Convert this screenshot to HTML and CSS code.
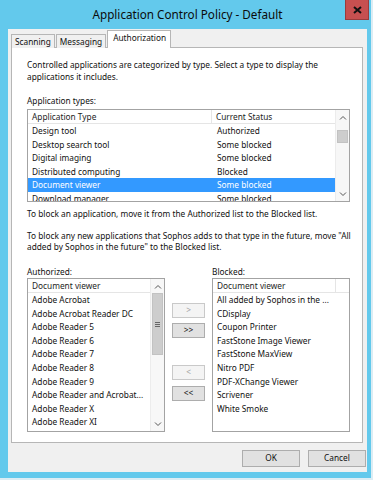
FILE: index.html
```html
<!DOCTYPE html>
<html lang="en">
<head>
  <meta charset="UTF-8">
  <title>Application Control Policy - Default</title>
  <link rel="stylesheet" href="styles.css">
</head>
<body>
  <div class="window">
    <div class="titlebar">
      <span class="title">Application Control Policy - Default</span>
      <button class="close" title="Close">
        <svg width="9" height="8" viewBox="0 0 9 8"><path d="M1 1 L8 7 M8 1 L1 7" stroke="#111" stroke-width="2"/></svg>
      </button>
    </div>

    <div class="client">
      <div class="tabs">
        <div class="tab">Scanning</div>
        <div class="tab">Messaging</div>
        <div class="tab active">Authorization</div>
      </div>

      <div class="panel">
        <p class="intro">Controlled applications are categorized by type. Select a type to display the applications it includes.</p>

        <div class="group-label">Application types:</div>
        <div class="listview types">
          <div class="lv-main">
            <div class="lv-head">
              <div class="col">Application Type</div>
              <div class="col">Current Status</div>
            </div>
            <div class="lv-row"><span>Design tool</span><span>Authorized</span></div>
            <div class="lv-row"><span>Desktop search tool</span><span>Some blocked</span></div>
            <div class="lv-row"><span>Digital imaging</span><span>Some blocked</span></div>
            <div class="lv-row"><span>Distributed computing</span><span>Blocked</span></div>
            <div class="lv-row selected"><span>Document viewer</span><span>Some blocked</span></div>
            <div class="lv-row"><span>Download manager</span><span>Some blocked</span></div>
          </div>
          <div class="vscroll">
            <div class="arrow"><svg width="8" height="5" viewBox="0 0 8 5"><polyline points="1,4.5 4,1.5 7,4.5" fill="none" stroke="#555" stroke-width="1"/></svg></div>
            <div class="track"><div class="thumb small"></div></div>
            <div class="arrow"><svg width="8" height="5" viewBox="0 0 8 5"><polyline points="1,0.5 4,3.5 7,0.5" fill="none" stroke="#555" stroke-width="1"/></svg></div>
          </div>
        </div>

        <p class="note">To block an application, move it from the Authorized list to the Blocked list.</p>
        <p class="note second">To block any new applications that Sophos adds to that type in the future, move "All added by Sophos in the future" to the Blocked list.</p>

        <div class="pickers">
          <div class="group-label">Authorized:</div>
          <div></div>
          <div class="group-label">Blocked:</div>

          <div class="listview apps">
            <div class="lv-main">
              <div class="lv-head"><div class="col">Document viewer</div></div>
              <div class="item">Adobe Acrobat</div>
              <div class="item">Adobe Acrobat Reader DC</div>
              <div class="item">Adobe Reader 5</div>
              <div class="item">Adobe Reader 6</div>
              <div class="item">Adobe Reader 7</div>
              <div class="item">Adobe Reader 8</div>
              <div class="item">Adobe Reader 9</div>
              <div class="item">Adobe Reader and Acrobat...</div>
              <div class="item">Adobe Reader X</div>
              <div class="item">Adobe Reader XI</div>
            </div>
            <div class="vscroll">
              <div class="arrow"><svg width="8" height="5" viewBox="0 0 8 5"><polyline points="1,4.5 4,1.5 7,4.5" fill="none" stroke="#555" stroke-width="1"/></svg></div>
              <div class="track">
                <div class="thumb tall">
                  <svg width="5" height="5" viewBox="0 0 5 5"><path d="M0 0.5 H5 M0 2.5 H5 M0 4.5 H5" stroke="#666" stroke-width="1"/></svg>
                </div>
              </div>
              <div class="arrow"><svg width="8" height="5" viewBox="0 0 8 5"><polyline points="1,0.5 4,3.5 7,0.5" fill="none" stroke="#555" stroke-width="1"/></svg></div>
            </div>
          </div>

          <div class="movers">
            <button class="btn small" disabled>&gt;</button>
            <button class="btn small">&gt;&gt;</button>
            <button class="btn small back" disabled>&lt;</button>
            <button class="btn small">&lt;&lt;</button>
          </div>

          <div class="listview apps">
            <div class="lv-main">
              <div class="lv-head split"><div class="col">Document viewer</div><div class="col"></div></div>
              <div class="item">All added by Sophos in the ...</div>
              <div class="item">CDisplay</div>
              <div class="item">Coupon Printer</div>
              <div class="item">FastStone Image Viewer</div>
              <div class="item">FastStone MaxView</div>
              <div class="item">Nitro PDF</div>
              <div class="item">PDF-XChange Viewer</div>
              <div class="item">Scrivener</div>
              <div class="item">White Smoke</div>
            </div>
          </div>
        </div>
      </div>

      <div class="footer">
        <button class="btn">OK</button>
        <button class="btn">Cancel</button>
      </div>
    </div>
  </div>
</body>
</html>
```

FILE: styles.css
```css
* {
  box-sizing: border-box;
}
body {
  margin: 0;
  background: #dcedf4;
  font-family: "Noto Sans", "Open Sans", sans-serif;
  font-size: 8.3px;
  color: #111;
}
.window {
  width: 371px;
  height: 478px;
  background: #63c9ec;
  display: flex;
  flex-direction: column;
}
.titlebar {
  height: 29px;
  position: relative;
  display: flex;
  align-items: center;
  justify-content: center;
}
.title {
  font-size: 11.7px;
  color: #0b0b0b;
  margin-top: -1px;
  margin-left: 4px;
}
.close {
  position: absolute;
  top: 0;
  right: 2px;
  width: 24px;
  height: 20px;
  padding: 0;
  background: #c75050;
  border: 1px solid #9a3c3c;
  border-top: none;
  display: flex;
  align-items: center;
  justify-content: center;
}

/* dialog body */
.client {
  height: 443px;
  margin: 0 4px 0 8px;
  padding: 1px 1px 0 3px;
  background: #f0f0f0;
}
.tabs {
  display: flex;
  align-items: flex-end;
  height: 18px;
  margin-bottom: -1px;
  position: relative;
  z-index: 1;
}
.tab {
  height: 14px;
  line-height: 13px;
  padding: 0 3px;
  border: 1px solid #b6b6b6;
  border-bottom: none;
  background: #f0f0f0;
  white-space: nowrap;
}
.tab + .tab {
  margin-left: 1px;
}
.tab.active {
  height: 18px;
  line-height: 14px;
  padding: 0 4px 0 5px;
  background: #fff;
}
.panel {
  width: 352px;
  height: 396px;
  background: #fff;
  border: 1px solid #b6b6b6;
  padding: 11px 12px 0 15px;
}
p {
  margin: 0;
}
.intro, .note {
  line-height: 11.5px;
}
.group-label {
  line-height: 11.5px;
  margin-top: 13px;
}
.note {
  margin-top: 6px;
  margin-right: -9px;
}
.note.second {
  margin-top: 10px;
}

/* list views */
.listview {
  display: flex;
  border: 1px solid #a3a3a3;
  background: #fff;
  overflow: hidden;
}
.lv-main {
  flex: 1;
  min-width: 0;
}
.lv-head {
  display: flex;
  height: 14px;
  line-height: 13px;
  border-bottom: 1px solid #e5e5e5;
  color: #1e1e1e;
}
.lv-head .col {
  padding-left: 4px;
  white-space: nowrap;
}
.types {
  height: 93px;
  margin-top: 2.5px;
}
.types .lv-head .col:first-child {
  width: 184px;
  border-right: 1px solid #e5e5e5;
}
.types .lv-head .col:last-child {
  flex: 1;
  padding-left: 4px;
}
.lv-row {
  display: grid;
  grid-template-columns: 184px 1fr;
  height: 13.6px;
  line-height: 13.6px;
  white-space: nowrap;
}
.lv-row span {
  padding-left: 4px;
}
.lv-row span + span {
  padding-left: 5px;
}
.lv-row.selected {
  background: #3399ff;
  color: #fff;
}

.vscroll {
  width: 14px;
  display: flex;
  flex-direction: column;
  background: #f7f7f7;
  border-left: 1px solid #ececec;
}
.arrow {
  height: 14px;
  display: flex;
  align-items: center;
  justify-content: center;
}
.track {
  flex: 1;
}
.thumb {
  margin: 0 1px;
  background: #cdcdcd;
  border: 1px solid #c2c2c2;
  display: flex;
  align-items: center;
  justify-content: center;
}
.thumb.small {
  margin-top: 6px;
  height: 13px;
}
.thumb.tall {
  height: 62px;
}

.pickers {
  display: grid;
  grid-template-columns: 138px 47px 1fr;
}
.pickers .group-label {
  margin-top: 13px;
}
.apps {
  margin-top: 1px;
  height: 154px;
}
.item {
  height: 13.6px;
  line-height: 13.6px;
  padding-left: 4px;
  white-space: nowrap;
}
.apps .lv-head .col {
  flex: 1;
}
.lv-head.split .col:first-child {
  flex: none;
  width: 123px;
  border-right: 1px solid #e5e5e5;
}

/* buttons */
.btn {
  font-family: inherit;
  font-size: 8.3px;
  color: #111;
  background: #e1e1e1;
  border: 1px solid #adadad;
  padding: 0;
  line-height: 1;
}
.btn:disabled {
  background: #f4f4f4;
  border-color: #c9c9c9;
  color: #a3a3a3;
}
.movers {
  display: flex;
  flex-direction: column;
  align-items: center;
  padding-top: 26px;
}
.btn.small {
  width: 33px;
  height: 15px;
  margin-bottom: 5px;
}
.btn.back {
  margin-top: 22px;
  margin-bottom: 6px;
}
.footer {
  display: flex;
  justify-content: flex-end;
  gap: 8px;
  margin-top: 7px;
}
.footer .btn {
  width: 58px;
  height: 17px;
}
```
